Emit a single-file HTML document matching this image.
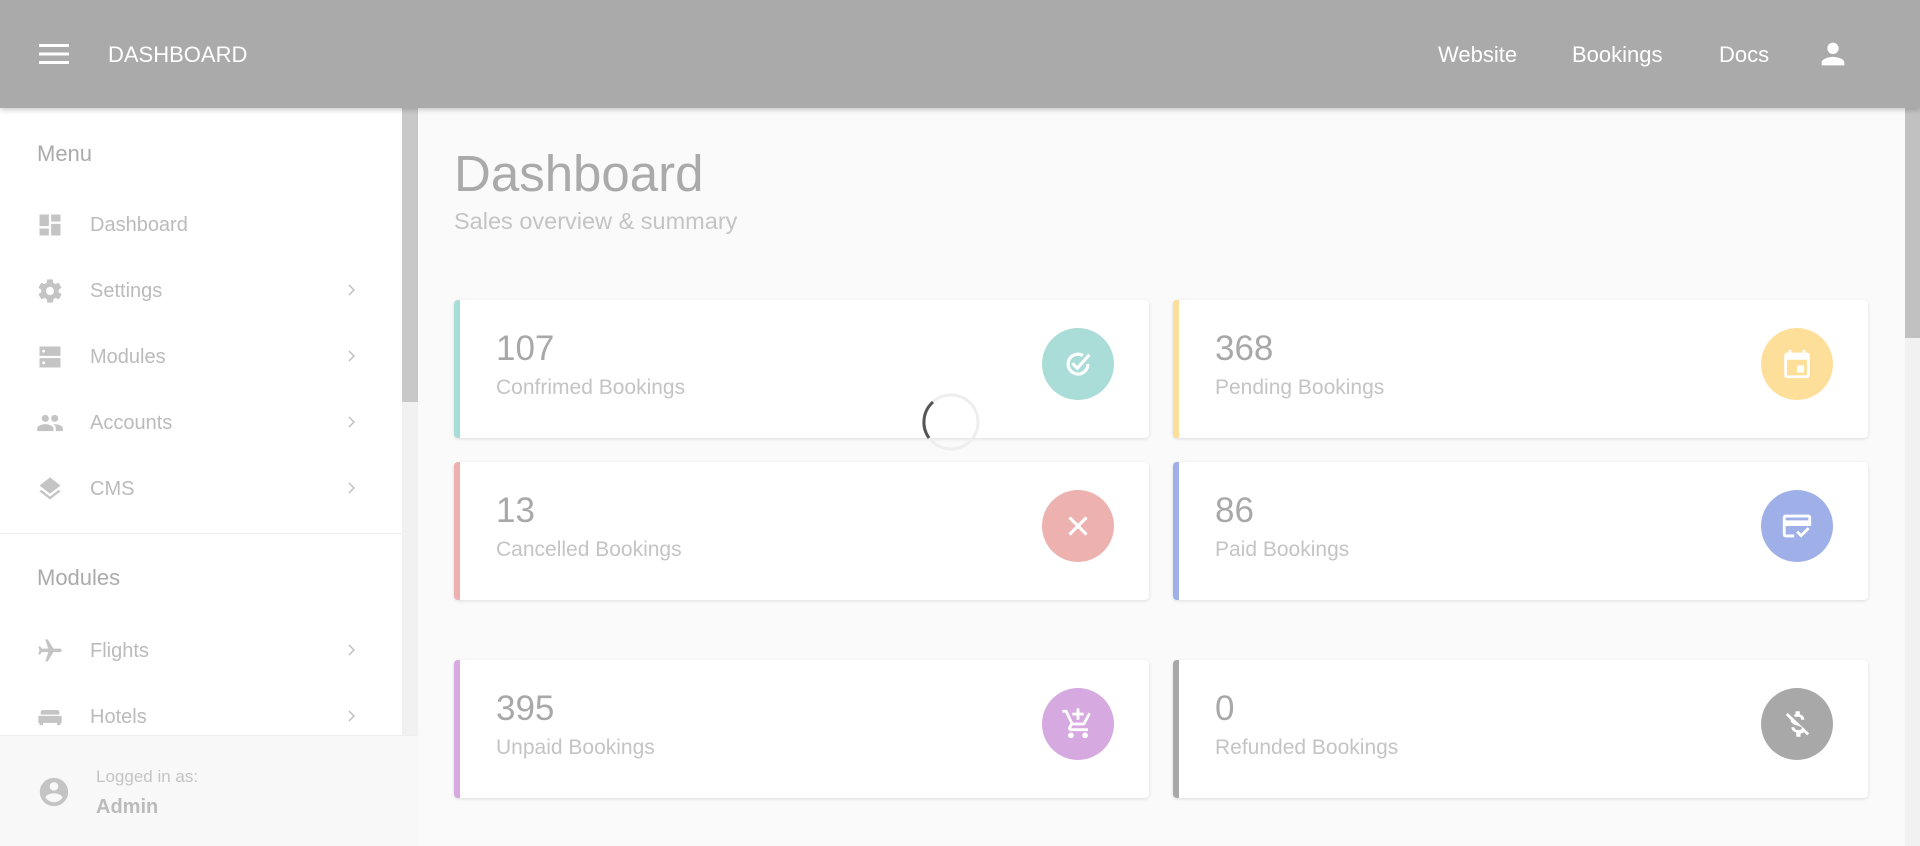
<!DOCTYPE html>
<html><head><meta charset="utf-8"><style>
*{margin:0;padding:0;box-sizing:border-box}
body{width:1920px;height:846px;overflow:hidden;background:#fafafa;font-family:"Liberation Sans",sans-serif;position:relative}
.top{position:absolute;left:0;top:0;width:1920px;height:108px;background:#aaaaaa;box-shadow:0 2px 5px rgba(0,0,0,.2);z-index:3}
.top .t{position:absolute;color:#fff;font-size:22px;top:42px}
.side{position:absolute;left:0;top:108px;width:418px;height:738px;background:#fff;border-right:1px solid #eee}
.sb{position:absolute;left:402px;top:108px;width:16px;height:627px;background:#f1f1f1}
.sb div{height:294px;background:#c8c8c8}
.h{position:absolute;left:37px;color:#aaa;font-size:22px}
.it{position:absolute;left:0;width:400px;height:40px}
.it .tx{position:absolute;left:90px;top:10px;font-size:20px;color:#bbb}
.it svg.ic{position:absolute;left:36px;top:7px;width:28px;height:28px;fill:#c4c4c4}
.it .ch{position:absolute;left:344px;top:12px;width:16px;height:16px}
.foot{position:absolute;left:0;top:735px;width:418px;height:111px;background:#f8f8f8;border-top:1px solid #eee}
.main-t{position:absolute;left:454px;top:144px;font-size:51px;color:#aaa}
.sub{position:absolute;left:454px;top:208px;font-size:23.5px;color:#c4c4c4}
.card{position:absolute;width:695px;height:138px;background:#fff;border-radius:4px;box-shadow:0 1px 3px rgba(0,0,0,.12);border-left:6px solid}
.card .n{position:absolute;left:36px;top:29px;font-size:35px;color:#a8a8a8}
.card .l{position:absolute;left:36px;top:76px;font-size:21px;color:#c4c4c4}
.card .c{position:absolute;left:582px;top:28px;width:72px;height:72px;border-radius:50%}
.card .c svg{position:absolute;left:19px;top:19px;width:34px;height:34px;fill:#fff}
.rsb{position:absolute;left:1905px;top:108px;width:15px;height:738px;background:#f1f1f1}
.rsb div{height:230px;background:#c1c1c1}
</style></head><body>
<div class="top">
<svg style="position:absolute;left:39px;top:42px" width="30" height="24" viewBox="0 0 30 24"><rect y="2" width="30" height="3" fill="#fff"/><rect y="10.5" width="30" height="3" fill="#fff"/><rect y="19" width="30" height="3" fill="#fff"/></svg>
<div class="t" style="left:108px">DASHBOARD</div>
<div class="t" style="left:1438px">Website</div>
<div class="t" style="left:1572px">Bookings</div>
<div class="t" style="left:1719px">Docs</div>
<svg style="position:absolute;left:1816px;top:37px" width="34" height="34" viewBox="0 0 24 24" fill="#fff"><path d="M12 12c2.2 0 4-1.8 4-4s-1.8-4-4-4-4 1.8-4 4 1.8 4 4 4zm0 2c-2.7 0-8 1.3-8 4v2h16v-2c0-2.7-5.3-4-8-4z"/></svg>
</div>
<div class="side">
<div class="h" style="top:33px">Menu</div>
<div class="it" style="top:96px"><svg class="ic" viewBox="0 0 24 24"><path d="M3 13h8V3H3v10zm0 8h8v-6H3v6zm10 0h8V11h-8v10zm0-18v6h8V3h-8z"/></svg><div class="tx">Dashboard</div></div>
<div class="it" style="top:162px"><svg class="ic" viewBox="0 0 24 24"><path d="M19.4 13c.04-.3.06-.6.06-1s-.02-.7-.06-1l2.1-1.6c.2-.15.25-.4.12-.64l-2-3.46c-.12-.22-.4-.3-.6-.22l-2.5 1c-.5-.4-1.1-.7-1.7-1l-.4-2.650C14.4 2.200 14.2 2 14 2h-4c-.25 0-.45.2-.5.42l-.4 2.65c-.6.25-1.2.6-1.700 1l-2.5-1c-.2-.1-.5 0-.6.22l-2 3.46c-.1.2-.08.5.12.64L4.6 11c-.04.3-.07.6-.07 1s.02.7.06 1l-2.1 1.6c-.2.15-.25.4-.12.64l2 3.46c.12.22.4.3.6.22l2.5-1c.5.4 1.1.7 1.7 1l.4 2.65c.05.24.25.42.5.42h4c.25 0 .45-.18.5-.42l.4-2.65c.6-.25 1.2-.6 1.7-1l2.5 1c.2.1.5 0 .6-.22l2-3.46c.12-.22.07-.5-.12-.64L19.4 13zM12 15.5c-1.9 0-3.5-1.6-3.5-3.5s1.6-3.5 3.5-3.5 3.5 1.6 3.5 3.5-1.6 3.5-3.5 3.5z"/></svg><div class="tx">Settings</div><svg class="ch" viewBox="0 0 16 16"><path d="M5 3l5 5-5 5" stroke="#bbb" stroke-width="1.3" fill="none"/></svg></div>
<div class="it" style="top:228px"><svg class="ic" viewBox="0 0 24 24"><path d="M3 3h18v8H3zM3 13h18v8H3z"/><circle cx="6.5" cy="7" r="1.2" fill="#fff"/><circle cx="6.5" cy="17" r="1.2" fill="#fff"/></svg><div class="tx">Modules</div><svg class="ch" viewBox="0 0 16 16"><path d="M5 3l5 5-5 5" stroke="#bbb" stroke-width="1.3" fill="none"/></svg></div>
<div class="it" style="top:294px"><svg class="ic" viewBox="0 0 24 24"><path d="M16 11c1.7 0 3-1.3 3-3s-1.3-3-3-3-3 1.3-3 3 1.3 3 3 3zm-8 0c1.7 0 3-1.3 3-3S9.7 5 8 5 5 6.3 5 8s1.3 3 3 3zm0 2c-2.3 0-7 1.2-7 3.5V19h14v-2.5C15 14.2 10.3 13 8 13zm8 0c-.3 0-.6 0-1 .05 1.2.8 2 2 2 3.45V19h6v-2.5c0-2.3-4.7-3.5-7-3.5z"/></svg><div class="tx">Accounts</div><svg class="ch" viewBox="0 0 16 16"><path d="M5 3l5 5-5 5" stroke="#bbb" stroke-width="1.3" fill="none"/></svg></div>
<div class="it" style="top:360px"><svg class="ic" viewBox="0 0 24 24"><path d="M12 18.5l-7.4-5.7L3 14l9 7 9-7-1.6-1.3L12 18.5zM12 16l7.4-5.7L21 9l-9-7-9 7 1.6 1.3L12 16z"/></svg><div class="tx">CMS</div><svg class="ch" viewBox="0 0 16 16"><path d="M5 3l5 5-5 5" stroke="#bbb" stroke-width="1.3" fill="none"/></svg></div>
<div style="position:absolute;left:0;top:425px;width:402px;height:1px;background:#eee"></div>
<div class="h" style="top:457px">Modules</div>
<div class="it" style="top:522px"><svg class="ic" viewBox="0 0 24 24"><path d="M21 16v-2l-8-5V3.5c0-.8-.7-1.5-1.5-1.5S10 2.7 10 3.5V9l-8 5v2l8-2.5V19l-2 1.5V22l3.5-1 3.5 1v-1.5L13 19v-5.5l8 2.5z" transform="rotate(90 12 12)"/></svg><div class="tx">Flights</div><svg class="ch" viewBox="0 0 16 16"><path d="M5 3l5 5-5 5" stroke="#bbb" stroke-width="1.3" fill="none"/></svg></div>
<div class="it" style="top:588px"><svg class="ic" viewBox="0 0 24 24"><path d="M4 8c0-1.1.9-2 2-2h12c1.1 0 2 .9 2 2v2H4zM2 11h20v6H2zM3 17h3v2H3zM18 17h3v2h-3z"/></svg><div class="tx">Hotels</div><svg class="ch" viewBox="0 0 16 16"><path d="M5 3l5 5-5 5" stroke="#bbb" stroke-width="1.3" fill="none"/></svg></div>
</div>
<div class="sb"><div></div></div>
<div class="foot">
<svg style="position:absolute;left:37px;top:39px" width="34" height="34" viewBox="0 0 24 24" fill="#c4c4c4"><path d="M12 2C6.5 2 2 6.5 2 12s4.5 10 10 10 10-4.5 10-10S17.5 2 12 2zm0 3c1.7 0 3 1.3 3 3s-1.3 3-3 3-3-1.3-3-3 1.3-3 3-3zm0 14.2c-2.5 0-4.7-1.3-6-3.2.03-2 4-3.1 6-3.1s5.970 1.1 6 3.1c-1.3 1.9-3.5 3.2-6 3.2z"/></svg>
<div style="position:absolute;left:96px;top:31px;font-size:17px;color:#c4c4c4">Logged in as:</div>
<div style="position:absolute;left:96px;top:60px;font-size:20px;color:#bbb;font-weight:bold">Admin</div>
</div>
<div class="main-t">Dashboard</div>
<div class="sub">Sales overview &amp; summary</div>

<div class="card" style="left:454px;top:300px;border-color:#a9ddd7"><div class="n">107</div><div class="l">Confrimed Bookings</div><div class="c" style="background:#aaddd8"><svg viewBox="0 0 24 24"><path d="M20 5.5L11.5 15l-3.5-3.5" stroke="#fff" stroke-width="2.2" fill="none"/><path d="M19 12a7 7 0 1 1-3.5-6" stroke="#fff" stroke-width="2.2" fill="none"/></svg></div></div>
<div class="card" style="left:1173px;top:300px;border-color:#fddf9a"><div class="n">368</div><div class="l">Pending Bookings</div><div class="c" style="background:#fddf9a"><svg viewBox="0 0 24 24"><path d="M19 4h-1V2h-2v2H8V2H6v2H5c-1.1 0-2 .9-2 2v14c0 1.1.9 2 2 2h14c1.1 0 2-.9 2-2V6c0-1.1-.9-2-2-2zm0 16H5V9h14v11zM12 13h5v5h-5z"/></svg></div></div>
<div class="card" style="left:454px;top:462px;border-color:#eeb0b0"><div class="n">13</div><div class="l">Cancelled Bookings</div><div class="c" style="background:#edb1b0"><svg viewBox="0 0 24 24"><path d="M6 6l12 12M18 6L6 18" stroke="#fff" stroke-width="2.2"/></svg></div></div>
<div class="card" style="left:1173px;top:462px;border-color:#9fb0e8"><div class="n">86</div><div class="l">Paid Bookings</div><div class="c" style="background:#9fb0e8"><svg viewBox="0 0 24 24"><path d="M20 4H4c-1.1 0-2 .9-2 2v12c0 1.1.9 2 2 2h6v-2H4v-6h16v0h2V6c0-1.1-.9-2-2-2zm0 4H4V6h16v2zm-5.1 12.2l-3.5-3.5 1.4-1.4 2.1 2.1 4.6-4.6 1.4 1.4z"/></svg></div></div>
<div class="card" style="left:454px;top:660px;border-color:#d7a9e1"><div class="n">395</div><div class="l">Unpaid Bookings</div><div class="c" style="background:#d7a9e1"><svg viewBox="0 0 24 24"><path d="M11 9h2V6h3V4h-3V1h-2v3H8v2h3v3zm-4 9c-1.1 0-2 .9-2 2s.9 2 2 2 2-.9 2-2-.9-2-2-2zm10 0c-1.1 0-2 .9-2 2s.9 2 2 2 2-.9 2-2-.9-2-2-2zM7.2 14.8l.9-1.8h7.5c.75 0 1.4-.4 1.7-1L21 4.9 19.3 4l-3.8 7H8.5L4.3 2H1v2h2l3.6 7.6L5.2 14c-.1.3-.2.6-.2 1 0 1.1.9 2 2 2h12v-2H7.4c-.1 0-.2-.1-.2-.2z"/></svg></div></div>
<div class="card" style="left:1173px;top:660px;border-color:#a8a8a8"><div class="n">0</div><div class="l">Refunded Bookings</div><div class="c" style="background:#a8a8a8"><svg viewBox="0 0 24 24"><path d="M12.5 6.9c1.8 0 2.4.9 2.5 2.1h2.2c-.1-1.7-1.1-3.3-3.2-3.8V3h-3v2.2c-.5.1-1 .3-1.4.5l1.5 1.5c.4-.2.9-.3 1.4-.3zM5.5 4.2L4.1 5.6 7.5 9c0 2.1 1.6 3.2 3.9 3.9l3.5 1c.9.9.8 2.4-1.9 2.4-1.9 0-2.7-.9-2.8-2H8c.1 2 1.6 3.2 3.5 3.6V21h3v-2.2c1-.2 1.8-.6 2.4-1.1l2.3 2.3 1.4-1.4z"/></svg></div></div>

<svg style="position:absolute;left:921px;top:392px" width="60" height="60" viewBox="0 0 60 60"><circle cx="30" cy="30" r="27" stroke="#eee" stroke-width="3" fill="none"/><path d="M12 10A27 27 0 0 0 8 46" stroke="#555" stroke-width="3" fill="none"/></svg>
<div class="rsb"><div></div></div>
</body></html>
